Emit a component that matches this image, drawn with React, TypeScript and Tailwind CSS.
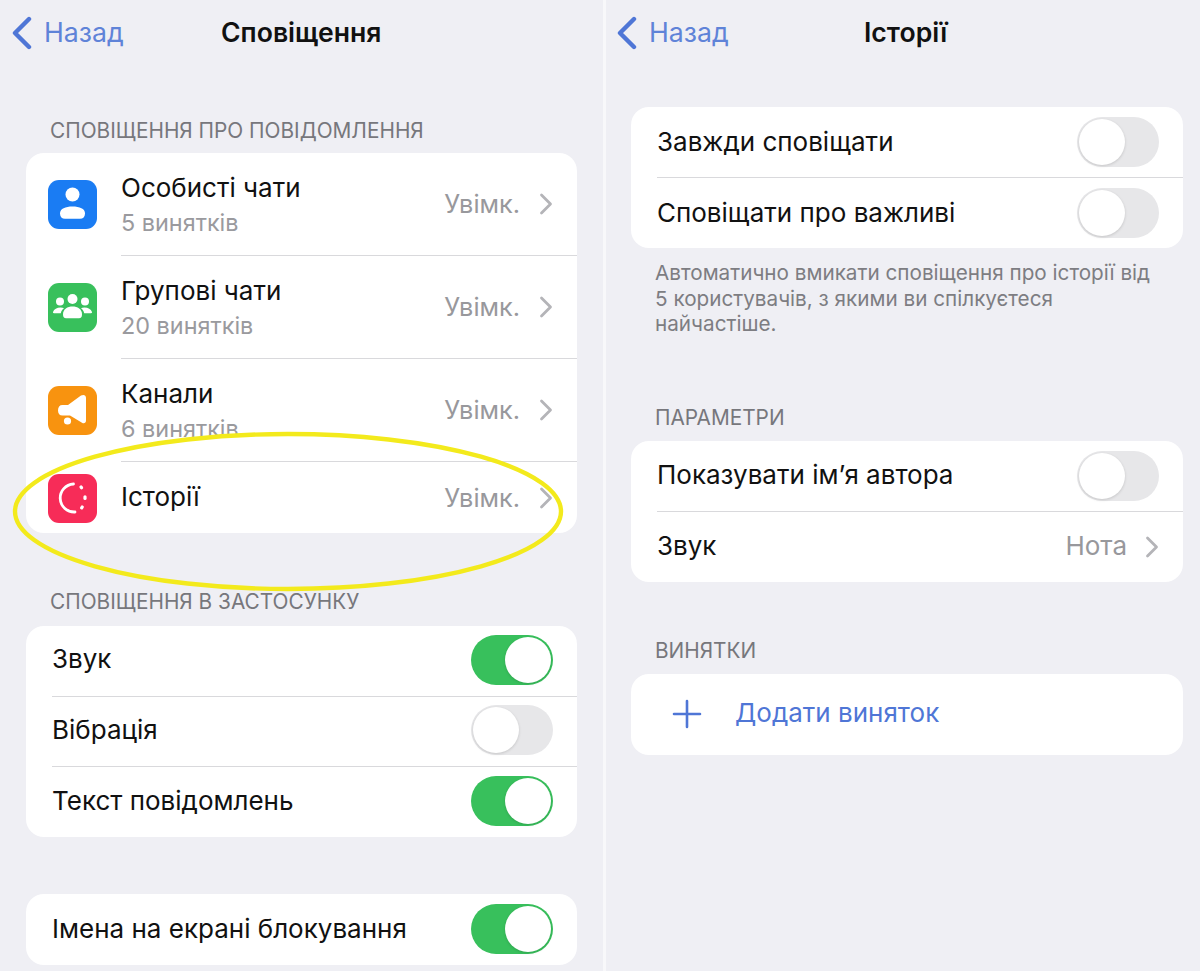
import React from 'react';

const font = "font-['Inter','Liberation_Sans',sans-serif]";

const Chevron: React.FC = () => (
  <svg width="14" height="22" viewBox="0 0 14 22" fill="none" className="shrink-0">
    <path d="M2.5 2 L11.5 11 L2.5 20" stroke="#b4b4b8" strokeWidth="2.8" strokeLinecap="round" strokeLinejoin="round" />
  </svg>
);

const Toggle: React.FC<{ on?: boolean }> = ({ on }) => (
  <div
    className={`w-[82px] h-[50px] rounded-full p-[2px] flex shrink-0 ${
      on ? 'bg-[#38c05c] justify-end' : 'bg-[#e7e7e9] justify-start'
    }`}
  >
    <div className="w-[46px] h-[46px] rounded-full bg-white shadow-[0_1px_3px_rgba(0,0,0,0.15)]" />
  </div>
);

const NavBar: React.FC<{ title: string; backLeft: string; titleClass: string }> = ({ title, backLeft, titleClass }) => (
  <div className="h-[66px] relative flex items-center">
    <div className={`flex items-center gap-[11px] ${backLeft}`}>
      <svg width="22" height="34" viewBox="0 0 22 34" fill="none">
        <path d="M18 3 L4 17 L18 31" stroke="#4f76d6" strokeWidth="4.4" strokeLinecap="round" strokeLinejoin="round" />
      </svg>
      <span className="text-[26.7px] text-[#5f83d8] pb-[1px]">Назад</span>
    </div>
    <div className={`absolute top-[15px] text-[26.6px] leading-[34px] font-semibold text-[#111] ${titleClass}`}>{title}</div>
  </div>
);

const SectionTitle: React.FC<{ children: React.ReactNode; className?: string }> = ({ children, className }) => (
  <div className={`text-[20.8px] leading-[24px] text-[#77777c] ${className ?? ''}`}>{children}</div>
);

const Divider: React.FC<{ inset: string }> = ({ inset }) => <div className={`h-px bg-[#d9d9dc] ${inset}`} />;

const SettingRow: React.FC<{ label: string; right: React.ReactNode; height?: string }> = ({
  label,
  right,
  height = 'h-[70px]',
}) => (
  <div className={`flex items-center justify-between pl-[26px] pr-[24px] ${height}`}>
    <span className="text-[26px] text-[#111] pb-[2px]">{label}</span>
    {right}
  </div>
);

const IconTile: React.FC<{ color: string; children: React.ReactNode }> = ({ color, children }) => (
  <div className={`w-[49px] h-[49px] rounded-[11px] flex items-center justify-center shrink-0 ${color}`}>{children}</div>
);

const PersonIcon = () => (
  <svg width="49" height="49" viewBox="0 0 49 49" fill="white">
    <circle cx="24.5" cy="14.5" r="7" />
    <path d="M12 33.5 C12 28.5 17.5 26.5 24.5 26.5 C31.5 26.5 37 28.5 37 33.5 C37 37 35 38.8 32 38.8 H17 C14 38.8 12 37 12 33.5 Z" />
  </svg>
);

const GroupIcon = () => (
  <svg width="49" height="49" viewBox="0 0 49 49" fill="white">
    <circle cx="24.5" cy="16" r="5" />
    <circle cx="12" cy="18.5" r="4" />
    <circle cx="37" cy="18.5" r="4" />
    <path d="M15 31.5 C15 26 19.5 23.5 24.5 23.5 C29.5 23.5 34 26 34 31.5 C34 34 33 35.2 31 35.2 H18 C16 35.2 15 34 15 31.5 Z" />
    <path d="M5 29 C6 26 9 24.5 12.5 24.5 C14 24.5 15.2 24.8 16 25.2 C14.2 26.6 13.2 28 12.8 30.2 H7 C5.5 30.2 4.7 30 5 29 Z" />
    <path d="M44 29 C43 26 40 24.5 36.5 24.5 C35 24.5 33.8 24.8 33 25.2 C34.8 26.6 35.8 28 36.2 30.2 H42 C43.5 30.2 44.3 30 44 29 Z" />
  </svg>
);

const MegaphoneIcon = () => (
  <svg width="49" height="49" viewBox="0 0 49 49" fill="white">
    <path d="M33 9.5 C36 8 38 9.5 38 12 V34.5 C38 37 36 38 34 36.8 L22 29.5 H14.5 C11.5 29.5 10 27.5 10 24.5 C10 21 11.5 19 14.5 19 H20 Z" />
    <circle cx="19.5" cy="35" r="3.6" />
  </svg>
);

const StoryIcon = () => (
  <svg width="49" height="49" viewBox="0 0 49 49" fill="none" stroke="white" strokeLinecap="round">
    <path d="M25.5 10 A14 14 0 1 0 27 38" strokeWidth="2.8" />
    <path d="M33 13 L33.6 13.8" strokeWidth="3.2" />
    <path d="M37 22.8 L37 24.4" strokeWidth="3.2" />
    <path d="M34.2 33 L33.7 33.8" strokeWidth="3.2" />
  </svg>
);

interface ChatRow {
  label: string;
  sub?: string;
  tile: string;
  icon: React.ReactNode;
}

const chatRows: ChatRow[] = [
  { label: 'Особисті чати', sub: '5 винятків', tile: 'bg-[#1a7cf3]', icon: <PersonIcon /> },
  { label: 'Групові чати', sub: '20 винятків', tile: 'bg-[#38c05c]', icon: <GroupIcon /> },
  { label: 'Канали', sub: '6 винятків', tile: 'bg-[#f8930f]', icon: <MegaphoneIcon /> },
  { label: 'Історії', tile: 'bg-[#f72c58]', icon: <StoryIcon /> },
];

const ChatRowView: React.FC<{ row: ChatRow }> = ({ row }) => (
  <div className={`flex items-center pl-[22px] pr-[24px] ${row.sub ? 'h-[102px]' : 'h-[71px] pt-[1px]'}`}>
    <IconTile color={row.tile}>{row.icon}</IconTile>
    <div className={`ml-[24px] flex-1 ${row.sub ? '' : 'pb-[2px]'}`}>
      <div className="text-[26px] leading-[32px] text-[#111]">{row.label}</div>
      {row.sub && <div className="text-[23.4px] leading-[28px] mt-[5px] text-[#9a9a9e]">{row.sub}</div>}
    </div>
    <span className="text-[25.3px] text-[#98989c] mr-[19px]">Увімк.</span>
    <Chevron />
  </div>
);

export default function App() {
  return (
    <div className={`relative w-[1200px] h-[971px] overflow-hidden flex bg-white ${font}`}>
      {/* left screen */}
      <div className="w-[603px] h-full bg-[#efeff4] shrink-0">
        <NavBar title="Сповіщення" backLeft="pl-[11px]" titleClass="left-[221px]" />
        <SectionTitle className="mt-[53px] pl-[50px]">СПОВІЩЕННЯ ПРО ПОВІДОМЛЕННЯ</SectionTitle>
        <div className="mx-[26px] mt-[10px] bg-white rounded-[18px] overflow-hidden">
          {chatRows.map((row, i) => (
            <div key={row.label}>
              {i > 0 && <Divider inset="ml-[95px]" />}
              <ChatRowView row={row} />
            </div>
          ))}
        </div>

        <SectionTitle className="mt-[57px] pl-[50px]">СПОВІЩЕННЯ В ЗАСТОСУНКУ</SectionTitle>
        <div className="mx-[26px] mt-[12px] bg-white rounded-[18px] overflow-hidden">
          <SettingRow label="Звук" right={<Toggle on />} height="h-[69.67px] pb-[2px]" />
          <Divider inset="ml-[26px]" />
          <SettingRow label="Вібрація" right={<Toggle />} height="h-[69.67px] pb-[2px]" />
          <Divider inset="ml-[26px]" />
          <SettingRow label="Текст повідомлень" right={<Toggle on />} height="h-[69.67px] pb-[2px]" />
        </div>

        <div className="mx-[26px] mt-[57px] bg-white rounded-[18px] overflow-hidden">
          <SettingRow label="Імена на екрані блокування" right={<Toggle on />} height="h-[71px]" />
        </div>
      </div>

      <div className="w-[3px] h-full bg-[#f8f8fa] shrink-0" />

      {/* right screen */}
      <div className="flex-1 h-full bg-[#efeff4]">
        <NavBar title="Історії" backLeft="pl-[10px]" titleClass="left-[258px]" />
        <div className="ml-[25px] mr-[17px] mt-[41px] bg-white rounded-[18px] overflow-hidden">
          <SettingRow label="Завжди сповіщати" right={<Toggle />} />
          <Divider inset="ml-[26px]" />
          <SettingRow label="Сповіщати про важливі" right={<Toggle />} />
        </div>
        <div className="pl-[49px] pr-[30px] mt-[12px] text-[20.7px] leading-[25.5px] text-[#7d7d82]">
          Автоматично вмикати сповіщення про історії від
          <br />5 користувачів, з якими ви спілкуєтеся
          <br />найчастіше.
        </div>
        <SectionTitle className="mt-[69px] pl-[49px]">ПАРАМЕТРИ</SectionTitle>
        <div className="ml-[25px] mr-[17px] mt-[11px] bg-white rounded-[18px] overflow-hidden">
          <SettingRow label="Показувати ім’я автора" right={<Toggle />} />
          <Divider inset="ml-[26px]" />
          <SettingRow
            label="Звук"
            right={
              <div className="flex items-center gap-[18px]">
                <span className="text-[26px] text-[#98989c] pb-[2px]">Нота</span>
                <Chevron />
              </div>
            }
          />
        </div>
        <SectionTitle className="mt-[57px] pl-[49px]">ВИНЯТКИ</SectionTitle>
        <div className="ml-[25px] mr-[17px] mt-[11px] h-[81px] bg-white rounded-[18px] flex items-center pl-[41px]">
          <svg width="30" height="30" viewBox="0 0 30 30" fill="none" className="shrink-0">
            <path d="M15 2 V28 M2 15 H28" stroke="#4f76d6" strokeWidth="2.6" strokeLinecap="round" />
          </svg>
          <span className="ml-[33px] text-[26px] text-[#4f76d6] pb-[3px]">Додати виняток</span>
        </div>
      </div>

      {/* hand-drawn yellow ring over the screenshot */}
      <svg width="1200" height="971" viewBox="0 0 1200 971" fill="none" className="absolute inset-0 pointer-events-none">
        <ellipse cx="288" cy="511.5" rx="273" ry="77.5" stroke="#f3ea1c" strokeWidth="4.4" />
      </svg>
    </div>
  );
}
